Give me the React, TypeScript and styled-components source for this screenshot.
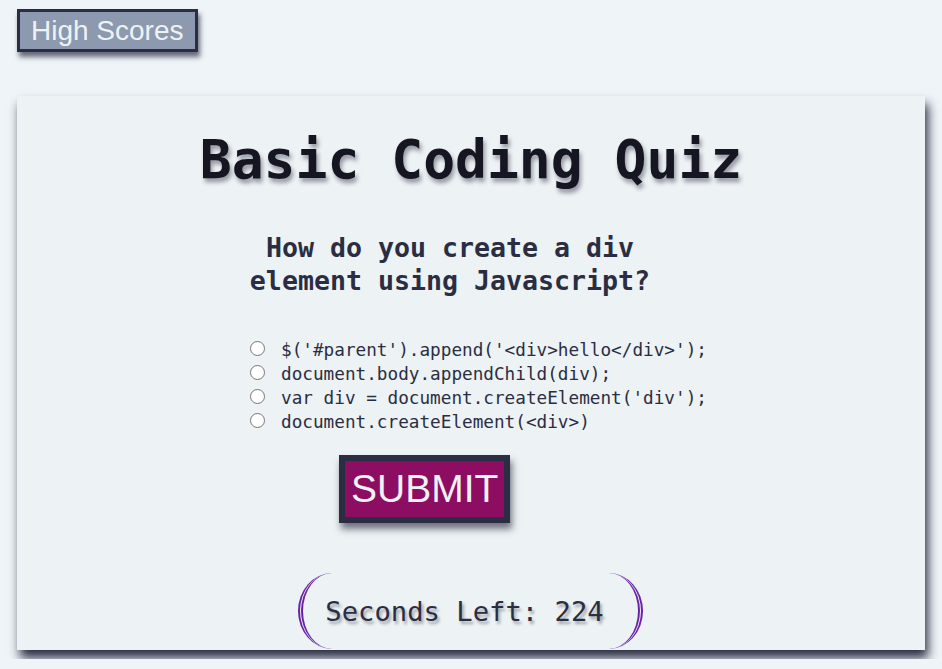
import React, { useState } from 'react';
import styled, { createGlobalStyle } from 'styled-components';

const GlobalStyle = createGlobalStyle`
  html, body {
    margin: 0;
    padding: 0;
    background: #eff4f8;
  }
  body {
    padding: 9px 17px;
    font-family: "DejaVu Sans Mono", "Liberation Mono", monospace;
  }
`;

const Header = styled.header`
  display: flex;
  height: 43px;
`;

const HighScoresButton = styled.button`
  font-family: "Liberation Sans", Arial, sans-serif;
  font-size: 28px;
  line-height: 32px;
  color: #edf2f4;
  background: #8d99ae;
  border: 3px solid #2b2d42;
  padding: 2.5px 11px;
  margin: 0;
  box-shadow: 2px 5px 5px rgba(43, 45, 66, 0.7);
  cursor: pointer;
`;

const Card = styled.main`
  margin-top: 44px;
  height: 554px;
  overflow: hidden;
  background: #edf2f4;
  box-shadow: 3px 8px 10px #2b2d42;
  display: flex;
  flex-direction: column;
`;

const Title = styled.h1`
  margin: 33px 0 0;
  font-size: 53px;
  line-height: 62px;
  font-weight: bold;
  text-align: center;
  color: #161622;
  text-shadow: 2px 4px 4px rgba(43, 45, 66, 0.45);
`;

const Quiz = styled.section`
  width: 404px;
  margin: 40px 0 0 231px;
  display: flex;
  flex-direction: column;
`;

const Question = styled.h2`
  margin: 0;
  font-size: 26.6px;
  line-height: 33px;
  font-weight: bold;
  text-align: center;
  white-space: nowrap;
  color: #2b2d42;
`;

const Choices = styled.div`
  margin-top: 41px;
  display: flex;
  flex-direction: column;
`;

const Choice = styled.label`
  display: flex;
  align-items: center;
  height: 24px;
  font-size: 17.7px;
  color: #2b2d42;
  white-space: nowrap;
  cursor: pointer;
`;

const Radio = styled.input`
  appearance: none;
  flex-shrink: 0;
  box-sizing: border-box;
  width: 15px;
  height: 15px;
  margin: 0 16px 0 2px;
  border: 1px solid #767676;
  border-radius: 50%;
  background: #fff;
  position: relative;
  top: -2px;

  &:checked {
    border: 4px solid #0075ff;
  }
`;

const SubmitButton = styled.button`
  align-self: flex-start;
  margin: 21px 0 0 91px;
  font-family: "Liberation Sans", Arial, sans-serif;
  font-size: 39px;
  line-height: 46px;
  color: #edf2f4;
  background: #8c0d62;
  border: 6px solid #2b2d42;
  padding: 5px 6px;
  box-shadow: 2px 6px 7px rgba(43, 45, 66, 0.65);
  cursor: pointer;
`;

const Timer = styled.div`
  align-self: center;
  margin: 50px 0 0 -1px;
  padding: 23px 34px 22px 22px;
  border-left: 5px double #6a22a6;
  border-right: 5px double #6a22a6;
  border-radius: 34px / 50%;
  font-size: 27.2px;
  color: #2b2d42;
  white-space: nowrap;
  text-shadow: 2px 3px 3px rgba(43, 45, 66, 0.4);
`;

const choices = [
  "$('#parent').append('<div>hello</div>');",
  'document.body.appendChild(div);',
  "var div = document.createElement('div');",
  'document.createElement(<div>)',
];

export default function App() {
  const [picked, setPicked] = useState<number | null>(null);
  const secondsLeft = 224;

  return (
    <>
      <GlobalStyle />
      <Header>
        <HighScoresButton>High Scores</HighScoresButton>
      </Header>
      <Card>
        <Title>Basic Coding Quiz</Title>
        <Quiz>
          <Question>
            How do you create a div
            <br />
            element using Javascript?
          </Question>
          <Choices>
            {choices.map((c, i) => (
              <Choice key={i}>
                <Radio
                  type="radio"
                  name="answer"
                  checked={picked === i}
                  onChange={() => setPicked(i)}
                />
                {c}
              </Choice>
            ))}
          </Choices>
          <SubmitButton>SUBMIT</SubmitButton>
        </Quiz>
        <Timer>Seconds Left: {secondsLeft}</Timer>
      </Card>
    </>
  );
}
